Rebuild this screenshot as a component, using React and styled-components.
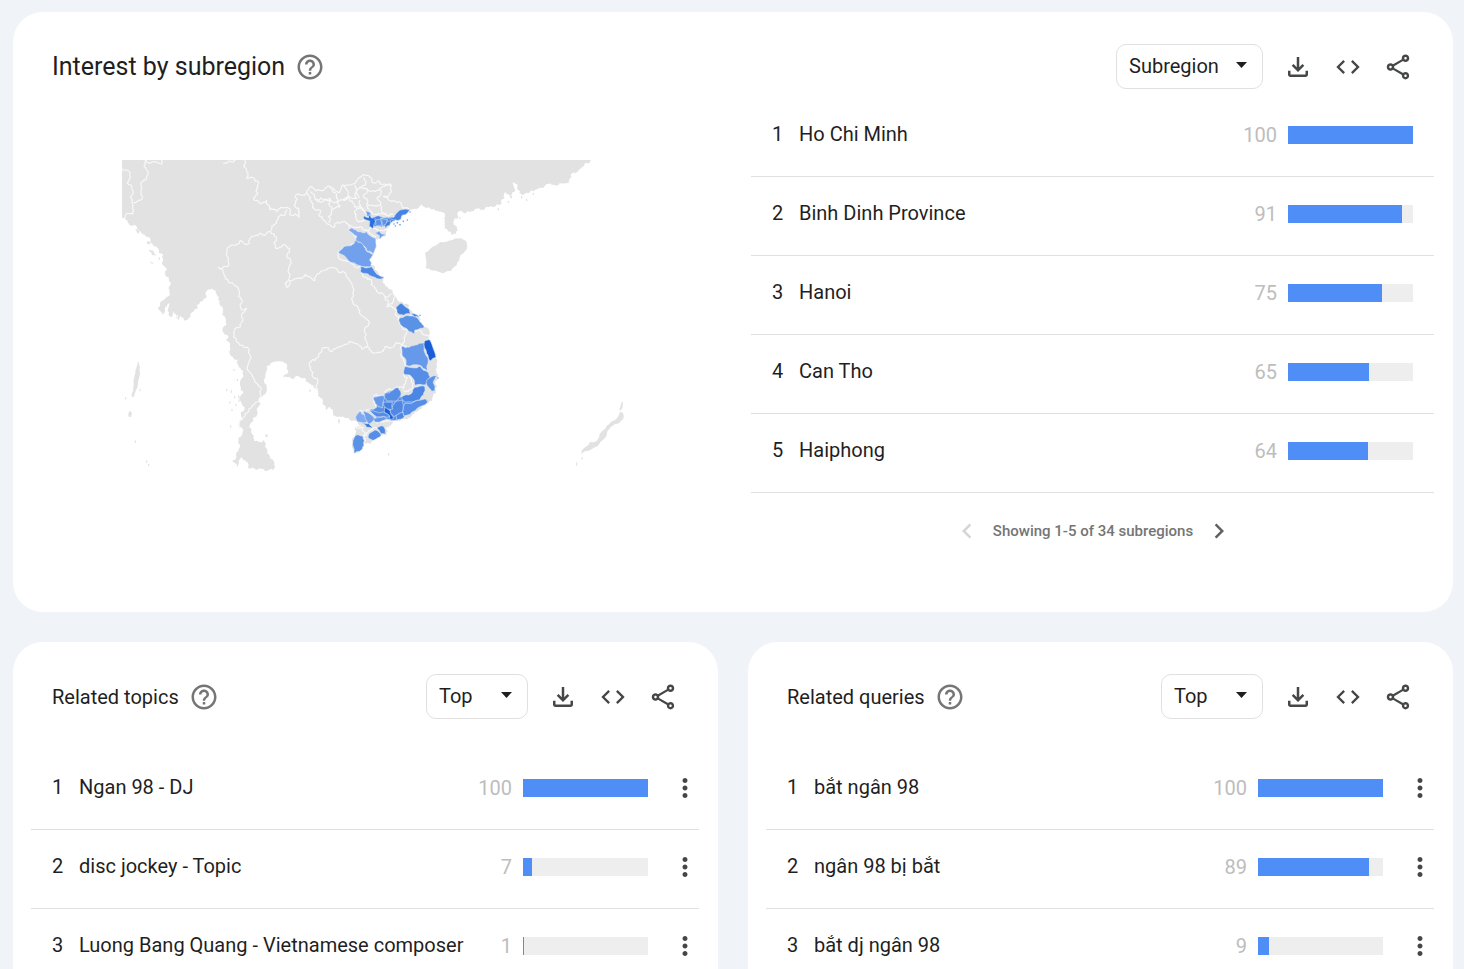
import React from "react";
import styled, { createGlobalStyle } from "styled-components";
import {
  MdHelpOutline,
  MdOutlineFileDownload,
  MdCode,
  MdOutlineShare,
  MdMoreVert,
  MdChevronLeft,
  MdChevronRight,
} from "react-icons/md";

const GlobalStyle = createGlobalStyle`
  *, *::before, *::after { box-sizing: border-box; }
  body {
    margin: 0;
    background: #f0f4f9;
    color: #1f1f1f;
    font-family: Roboto, "Noto Sans", sans-serif;
  }
  button, select { font: inherit; color: inherit; }
`;

const Page = styled.main`
  display: grid;
  grid-template-columns: minmax(0, 1fr) minmax(0, 1fr);
  gap: 30px;
  padding: 12px 11px 0 13px;
`;

const Card = styled.section`
  grid-column: ${(p) => (p.$wide ? "1 / -1" : "auto")};
  background: #fff;
  border-radius: 30px;
  padding: 32px 0 ${(p) => (p.$wide ? "66px" : "32px")};
`;

const CardHeader = styled.header`
  display: flex;
  align-items: center;
  height: 45px;
  padding: 0 30px 0 39px;
`;

const Title = styled.h2`
  margin: 0;
  font-size: ${(p) => (p.$large ? "25px" : "20px")};
  line-height: 30px;
  font-weight: 400;
`;

const IconButton = styled.button`
  display: flex;
  align-items: center;
  justify-content: center;
  flex: none;
  width: ${(p) => p.$width || 50}px;
  height: 30px;
  padding: 0;
  border: 0;
  background: none;
  color: ${(p) => p.$color || "#444746"};
  cursor: pointer;
  svg { flex: none; }
`;

const HelpButton = styled(IconButton)`
  margin-left: 10px;
`;

const Toolbar = styled.div`
  display: flex;
  align-items: center;
  margin-left: auto;
`;

const SelectBox = styled.label`
  position: relative;
  display: flex;
  width: ${(p) => p.$width}px;
  height: 45px;
  margin-right: 10px;
  svg {
    position: absolute;
    right: 16px;
    top: 18px;
    pointer-events: none;
  }
`;

const Select = styled.select`
  appearance: none;
  width: 100%;
  padding: 0 30px 2px 12px;
  border: 1px solid #e0e0e0;
  border-radius: 10px;
  background: #fff;
  font-size: 20px;
`;

const SubregionBody = styled.div`
  display: grid;
  grid-template-columns: minmax(0, 1fr) minmax(0, 1fr);
  padding-top: 9px;
`;

const MapPanel = styled.div`
  display: flex;
  justify-content: center;
  align-items: flex-start;
  padding-top: 62px;
  svg { width: 502px; max-width: 100%; height: auto; }
`;

const Ranking = styled.ol`
  list-style: none;
  margin: ${(p) => p.$top || 0}px 0 0;
  padding: 0 19px 0 18px;
`;

const Item = styled.li`
  display: grid;
  grid-template-columns: 27px minmax(0, 1fr) auto 125px ${(p) => (p.$menu ? "51px" : "21px")};
  align-items: center;
  height: 79px;
  padding: 0 0 5px 21px;
  border-bottom: 1px solid #e0e0e0;
  font-size: 20px;
  line-height: 24px;
`;

const ItemLabel = styled.span`
  padding-bottom: 2px;
  overflow: hidden;
  white-space: nowrap;
  text-overflow: ellipsis;
`;

const ItemValue = styled.span`
  padding: 0 11px 0 16px;
  color: #bdbdbd;
`;

const Track = styled.div`
  height: 18px;
  background: #eee;
`;

const Fill = styled.div`
  height: 100%;
  background: #4f8df7;
`;

const MenuButton = styled(IconButton)`
  justify-self: center;
  margin-left: 22px;
`;

const Pager = styled.nav`
  display: flex;
  align-items: center;
  justify-content: center;
  gap: 11px;
  padding-top: 23px;
  color: #757575;
  font-size: 15px;
  line-height: 30px;
  font-weight: 500;
`;

/* ---------- map ---------- */

// Subdivides a polyline with seeded noise so coasts and borders look natural.
function trace(coords, closed, amp = 0.13, passes = 2) {
  const n = coords.split(" ").map((c) => c.split(",").map(Number));
  let pts = closed ? [...n, n[0]] : n;
  let seed = Math.round(n[0][0] * 7 + n[0][1] * 13);
  const rnd = () => {
    seed = (seed * 1103515245 + 12345) % 2147483648;
    return seed / 2147483648 - 0.5;
  };
  for (let pass = 0; pass < passes; pass += 1) {
    const next = [pts[0]];
    for (let i = 1; i < pts.length; i += 1) {
      const [ax, ay] = pts[i - 1];
      const [bx, by] = pts[i];
      const len = Math.hypot(bx - ax, by - ay);
      if (len > 5 && len < 120) {
        const k = rnd() * amp * 2;
        next.push([(ax + bx) / 2 - (by - ay) * k, (ay + by) / 2 + (bx - ax) * k]);
      }
      next.push(pts[i]);
    }
    pts = next;
  }
  return "M" + pts.map(([x, y]) => `${x.toFixed(1)} ${y.toFixed(1)}`).join("L") + (closed ? "Z" : "");
}

const MAINLAND =
  "36,30 1448,30 1440,36 1422,48 1405,62 1385,70 1378,90 1360,100 1325,106 1300,114 1275,120 1255,130 1235,134 1220,116 1208,92 1214,124 1205,132 1202,146 1186,126 1182,146 1175,162 1150,172 1120,180 1090,184 1060,188 1045,185 1033,208 1035,225 1043,240 1040,250 1022,255 1012,240 1005,220 1002,188 985,182 965,178 955,172 935,163 920,178 902,180 880,194 872,208 850,215 838,228 828,238 828,250 812,268 798,268 790,285 785,310 778,325 784,345 800,362 822,383 825,405 850,432 870,455 898,478 925,500 943,532 958,542 963,572 977,620 980,640 985,675 975,695 976,720 970,735 950,760 915,785 880,808 855,812 845,810 837,830 828,852 810,858 790,870 765,880 755,900 732,910 735,860 738,832 755,825 735,812 715,804 690,800 670,790 660,770 650,780 640,765 635,745 622,720 610,705 595,698 570,682 545,688 520,683 523,638 490,637 470,648 470,715 452,740 440,780 428,805 425,840 432,872 462,870 470,910 480,920 491,960 440,960 415,955 405,930 395,922 380,950 378,910 385,875 390,830 392,790 402,770 400,730 395,685 385,645 368,620 360,585 352,555 348,510 340,480 330,455 318,430 303,418 290,424 290,440 270,455 262,475 240,492 220,512 210,498 206,510 200,488 196,506 190,484 184,502 180,460 165,480 155,500 162,450 175,415 170,380 158,345 150,310 140,290 120,275 105,255 85,240 60,225 45,205 36,200";

const ISLANDS = [
  "945,308 968,290 990,276 1028,270 1050,265 1070,275 1072,290 1052,315 1040,345 1000,370 985,365 947,355",
  "84,634 90,650 88,680 84,700 72,742 65,740 70,710 76,670 80,650",
  "57,784 65,786 63,801 56,800",
  "1412,914 1416,900 1440,875 1460,873 1486,836 1510,812 1526,798 1530,786 1538,788 1539,808 1515,822 1500,834 1472,875 1445,898",
  "1533,760 1538,754 1538,770 1530,782 1528,776",
  "1399,935 1402,938 1401,948 1398,946",
  "116,300 130,302 138,318 126,316",
  "120,334 130,338 126,343",
  "112,272 122,276 120,284 110,280",
  "76,238 90,242 84,252",
  "466,852 474,854 472,862 467,860",
  "684,808 690,810 688,824 685,818",
];

const SPECKS = [
  [47, 745], [90, 720], [76, 875], [110, 935], [116, 945], [382, 690], [386, 740], [364, 725],
  [374, 742], [360, 758], [378, 765], [366, 780], [362, 830], [372, 660], [387, 752], [350, 720],
  [372, 622], [132, 262], [142, 290], [148, 326], [1250, 150], [1235, 142], [1195, 156], [1165, 178],
  [612, 708], [600, 722], [1270, 132], [1050, 204], [1416, 925], [836, 913],
];

const BORDERS = [
  "36,55 50,60 52,100 62,140 68,165 68,192 50,190 45,205",
  "108,30 110,60 108,90 97,95 97,145 85,152 70,158",
  "108,30 118,40 155,42 155,30",
  "340,42 360,33 378,30",
  "405,30 402,45 410,60 410,85 445,95 440,115 430,145 470,152 480,180 500,185 532,172 540,195 568,202 566,175 555,160 558,135 590,128 605,110 635,122 655,108 670,115 690,125 700,105 735,100 765,75 785,95 805,92 840,102 845,125 820,140 845,155 880,175 902,180",
  "532,180 505,200 500,220 480,245 450,250 420,265 418,280 365,285 352,300 350,350 325,352 345,385 385,440 395,480 410,475 395,492 392,530 372,545 380,575 420,615 428,680 440,700 452,735 430,765 405,790 390,835",
  "480,245 500,265 498,295 540,295 542,330 525,400 532,412 560,385 585,373 615,392 650,358 690,368 730,415 732,465 748,490 778,518 774,590",
  "622,720 622,700 608,680 600,636 615,632 640,593 690,590 748,587 755,597 770,590 778,600 815,605 825,590 855,583 877,582",
  "590,128 600,150 630,180 640,210 675,230 700,215 720,225 715,240 740,262 738,275 685,305 720,335 752,348 755,370 780,388 795,415 825,440 832,470 855,475 868,500 870,520 895,540 885,555 877,585 875,610 885,645 882,675 892,682 880,715 845,720 825,725 820,740 792,738 795,760 810,780 778,778 750,780 737,805",
  "600,125 620,150 645,150 660,145 685,155 700,150 740,145 735,105",
  "660,108 680,145 690,170",
  "615,145 635,155 660,150 665,180 655,200 658,220",
  "690,170 665,178",
  "700,150 712,140 730,160 735,172 752,175",
  "740,175 738,200 745,215 762,212 768,190 750,172 740,175",
  "750,150 752,172 770,182",
  "700,105 715,130 705,150",
  "760,82 768,95 750,112 770,115 795,125 810,115 845,110",
  "750,112 748,145",
  "770,115 772,160 785,185 820,192 850,192",
  "810,118 812,165 830,190",
  "772,160 812,165",
  "720,225 745,232 765,240 780,236 800,240 828,238",
  "765,240 780,250 798,262",
  "832,470 850,455 855,440",
  "825,440 845,432",
  "895,540 930,540 943,555 960,560",
  "877,585 900,592 925,590",
  "895,675 905,690 908,715 880,722",
  "760,860 775,845 790,835 810,838 835,832",
  "738,835 760,832 765,850 755,880",
  "800,820 820,815 845,815",
];

const PROVINCES = [
  ["#5a8fe6", "790,742 820,738 845,722 865,715 872,740 900,755 930,750 955,750 915,780 880,800 858,811 800,806 778,780 800,772"],
  ["#4c84e2", "762,198 782,204 870,204 848,214 838,228 815,230 790,228"],
  ["#6d9fed", "765,182 780,186 782,198 770,198"],
  ["#2a6fdb", "762,198 775,204 780,192 784,204 794,202 796,216 788,236 778,228 780,214 762,208"],
  ["#5a92e8", "797,210 812,206 813,227 799,229"],
  ["#5a92e8", "815,206 832,208 830,223 816,227"],
  ["#3f7fe0", "832,212 842,212 838,226 826,234 825,226"],
  ["#4684e4", "812,204 852,202 870,180 902,178 894,187 878,195 872,208 850,210"],
  ["#70a0ec", "796,248 808,243 815,252 828,255 810,268 808,256"],
  ["#7ea8ee", "715,240 728,235 745,245 770,245 797,265 790,312 770,302 755,280 737,274 740,258"],
  ["#71a0ec", "685,308 700,292 722,287 738,270 755,280 768,302 789,312 779,328 784,350 750,347 715,332"],
  ["#4c88e4", "750,350 785,350 795,365 822,382 808,387 780,377 752,366"],
  ["#4684e0", "858,472 875,460 898,478 900,492 880,496 862,488"],
  ["#5a92e6", "868,505 885,498 915,500 935,520 943,532 930,535 915,540 913,552 895,542 870,522"],
  ["#4c88e4", "902,488 920,494 928,502 912,500"],
  ["#6699e9", "876,588 898,592 915,585 942,578 945,610 954,640 950,662 930,646 888,646 888,630 876,610"],
  ["#1a5fd8", "943,575 960,570 978,622 960,633 950,610"],
  ["#558de7", "885,649 930,648 955,668 960,680 947,704 915,706 905,680 882,673"],
  ["#5a92e6", "950,690 965,680 982,678 970,700 975,722 965,724 950,705"],
  ["#4c86e4", "872,742 885,735 905,730 915,712 944,709 940,735 930,750 900,756 878,752"],
  ["#558de7", "884,760 910,757 948,746 952,758 915,782 880,798 880,770"],
  ["#5088e4", "852,762 875,750 880,765 873,790 852,800 840,785"],
  ["#568ee6", "823,730 845,722 865,713 873,735 855,754 830,752"],
  ["#6699e9", "790,742 822,737 820,755 817,774 795,760"],
  ["#4482e2", "820,757 847,756 849,777 826,774"],
  ["#558ce6", "778,778 795,785 820,786 840,800 800,800"],
  ["#1a5fd8", "824,772 834,778 843,792 850,806 841,811 838,796 825,788"],
  ["#4c88e4", "858,798 880,788 883,800 858,812"],
  ["#70a0ec", "760,783 780,792 794,808 776,822 762,802"],
  ["#80aaf0", "736,804 750,782 765,798 772,814 745,816"],
  ["#6699e9", "792,805 820,800 842,810 795,816"],
  ["#3a7ce0", "758,819 775,820 789,833 770,832"],
  ["#558de7", "777,852 795,840 814,856 790,871 775,864"],
  ["#4c88e4", "801,832 820,829 829,854 812,852"],
  ["#5a92e6", "734,860 742,854 759,859 762,886 748,904 732,910"],
];

const BLUE_SPECKS = [[852, 222], [862, 218], [870, 224], [880, 214], [892, 210], [856, 228], [900, 186], [984, 684], [930, 496]];

function RegionMap() {
  return (
    <svg viewBox="36 30 1506 933" role="img" aria-label="Map of Vietnam by subregion">
      <g fill="#e2e2e2">
        <path d={trace(MAINLAND, true, 0.3, 3)} />
        {ISLANDS.map((c) => <path key={c} d={trace(c, true)} />)}
        {SPECKS.map(([x, y]) => <ellipse key={`${x}-${y}`} cx={x} cy={y} rx="2" ry="4" />)}
      </g>
      <g fill="none" stroke="#f8f8f8" strokeWidth="3.5" strokeLinejoin="round">
        {BORDERS.map((c) => <path key={c} d={trace(c, false, 0.28, 3)} />)}
      </g>
      <g stroke="#e4edfa" strokeWidth="1.6" strokeLinejoin="round">
        {PROVINCES.map(([fill, c]) => <path key={c} fill={fill} d={trace(c, true, 0.15)} />)}
      </g>
      <g fill="#6d9fed">
        {BLUE_SPECKS.map(([x, y]) => <circle key={`${x}-${y}`} cx={x} cy={y} r="2.5" />)}
      </g>
    </svg>
  );
}

/* ---------- widgets ---------- */

function WidgetHeader({ title, large, option, selectWidth }) {
  return (
    <CardHeader>
      <Title $large={large}>{title}</Title>
      <HelpButton type="button" aria-label={`Help: ${title}`} $width={30} $color="#757575">
        <MdHelpOutline size={30} />
      </HelpButton>
      <Toolbar>
        <SelectBox $width={selectWidth}>
          <Select aria-label={`${title} view`} defaultValue={option}>
            <option>{option}</option>
          </Select>
          <svg width="11" height="6" viewBox="0 0 11 6" aria-hidden="true">
            <path d="M0 0h11L5.500 6z" fill="#1f1f1f" />
          </svg>
        </SelectBox>
        <IconButton type="button" aria-label="Download"><MdOutlineFileDownload size={30} /></IconButton>
        <IconButton type="button" aria-label="Embed"><MdCode size={28} /></IconButton>
        <IconButton type="button" aria-label="Share"><MdOutlineShare size={30} /></IconButton>
      </Toolbar>
    </CardHeader>
  );
}

function RankingList({ items, menu, top }) {
  return (
    <Ranking $top={top}>
      {items.map(([label, value], i) => (
        <Item key={label} $menu={menu}>
          <ItemLabel>{i + 1}</ItemLabel>
          <ItemLabel>{label}</ItemLabel>
          <ItemValue>{value}</ItemValue>
          <Track><Fill style={{ width: `${value}%` }} /></Track>
          {menu && (
            <MenuButton type="button" aria-label={`More options for ${label}`} $width={30}>
              <MdMoreVert size={30} />
            </MenuButton>
          )}
        </Item>
      ))}
    </Ranking>
  );
}

const SUBREGIONS = [["Ho Chi Minh", 100], ["Binh Dinh Province", 91], ["Hanoi", 75], ["Can Tho", 65], ["Haiphong", 64]];
const TOPICS = [["Ngan 98 - DJ", 100], ["disc jockey - Topic", 7], ["Luong Bang Quang - Vietnamese composer", 1]];
const QUERIES = [["bắt ngân 98", 100], ["ngân 98 bị bắt", 89], ["bắt dj ngân 98", 9]];

export default function App() {
  return (
    <>
      <GlobalStyle />
      <Page>
        <Card $wide>
          <WidgetHeader title="Interest by subregion" large option="Subregion" selectWidth={147} />
          <SubregionBody>
            <MapPanel><RegionMap /></MapPanel>
            <div>
              <RankingList items={SUBREGIONS} />
              <Pager aria-label="Subregion pages">
                <IconButton type="button" aria-label="Previous" disabled $width={30} $color="#d5d5d5">
                  <MdChevronLeft size={30} />
                </IconButton>
                <span>Showing 1-5 of 34 subregions</span>
                <IconButton type="button" aria-label="Next" $width={30} $color="#616161">
                  <MdChevronRight size={30} />
                </IconButton>
              </Pager>
            </div>
          </SubregionBody>
        </Card>
        <Card>
          <WidgetHeader title="Related topics" option="Top" selectWidth={102} />
          <RankingList items={TOPICS} menu top={32} />
        </Card>
        <Card>
          <WidgetHeader title="Related queries" option="Top" selectWidth={102} />
          <RankingList items={QUERIES} menu top={32} />
        </Card>
      </Page>
    </>
  );
}
